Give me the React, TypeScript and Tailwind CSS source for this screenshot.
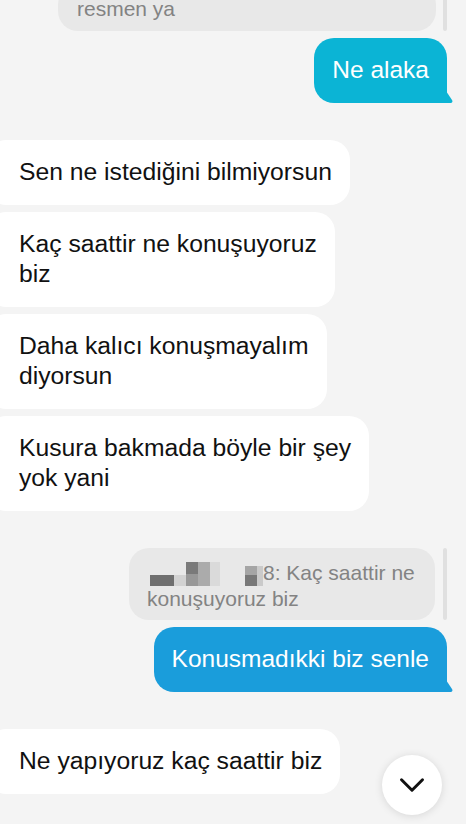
import { ChevronDown } from 'lucide-react'

const font = { fontFamily: '"Liberation Sans", Arial, sans-serif' }

function Tail({ color }: { color: string }) {
  return (
    <svg
      className="absolute bottom-0 right-[-7px]"
      width="8"
      height="12"
      viewBox="0 0 8 12"
    >
      <path d="M0 0 L6 9 Q7.3 11 5 12 L0 12 Z" fill={color} />
    </svg>
  )
}

function Incoming({ lines }: { lines: string[] }) {
  return (
    <div className="flex justify-start">
      <div className="ml-[-14px] w-fit rounded-[20px] bg-white pl-[33px] pr-[18px] pt-[17px] pb-[18px] text-[24.7px] leading-[30px] text-[#111]">
        {lines.map((l, i) => (
          <div key={i} className="whitespace-nowrap">
            {l}
          </div>
        ))}
      </div>
    </div>
  )
}

function Outgoing({ text, color }: { text: string; color: string }) {
  return (
    <div className="flex justify-end pr-[19px]">
      <div
        className="relative w-fit rounded-[20px] rounded-br-none px-[18px] pt-[17px] pb-[18px] text-[24.5px] leading-[30px] text-white whitespace-nowrap"
        style={{ backgroundColor: color }}
      >
        {text}
        <Tail color={color} />
      </div>
    </div>
  )
}

function Blur() {
  return (
    <span className="inline-flex items-end align-[-6px]">
      <span className="h-[11px] w-[24px] bg-[#6f6f6f]" />
      <span className="h-[11px] w-[12px] bg-[#d2d2d2]" />
      <span className="flex h-[24px] w-[12px] flex-col">
        <span className="h-[12px] bg-[#7a7a7a]" />
        <span className="h-[12px] bg-[#989898]" />
      </span>
      <span className="h-[24px] w-[12px] bg-[#ababab]" />
      <span className="h-[24px] w-[10px] bg-[#dadada]" />
      <span className="w-[25px]" />
      <span className="flex h-[20px] w-[12px] flex-col">
        <span className="h-[9px] bg-[#a5a5a5]" />
        <span className="h-[11px] bg-[#787878]" />
      </span>
      <span className="h-[20px] w-[6px] bg-[#cacaca]" />
    </span>
  )
}

export default function App() {
  return (
    <div
      className="relative flex h-[824px] w-[466px] flex-col overflow-hidden bg-[#f4f4f4]"
      style={font}
    >
      {/* quoted reply, cut at top */}
      <div className="mt-[-15px] flex justify-end gap-[7px] pr-[19px]">
        <div className="w-[378px] rounded-[20px] bg-[#e8e8e8] pl-[19px] pr-[18px] pt-[11px] pb-[10px] text-[21px] leading-[25px] text-[#838383]">
          resmen ya
        </div>
        <div className="w-[4px] rounded-full bg-[#e0e0e0]" />
      </div>

      <div className="mt-[7px]">
        <Outgoing text="Ne alaka" color="#0bb4d5" />
      </div>

      <div className="mt-[37px] flex flex-col gap-[7px]">
        <Incoming lines={['Sen ne istediğini bilmiyorsun']} />
        <Incoming lines={['Kaç saattir ne konuşuyoruz', 'biz']} />
        <Incoming lines={['Daha kalıcı konuşmayalım', 'diyorsun']} />
        <Incoming lines={['Kusura bakmada böyle bir şey', 'yok yani']} />
      </div>

      {/* quoted reply */}
      <div className="mt-[37px] flex justify-end gap-[8px] pr-[19px]">
        <div className="w-[306px] rounded-[20px] bg-[#e8e8e8] pl-[18px] pr-[14px] pt-[12px] pb-[9px] text-[21px] leading-[25px] text-[#838383]">
          <div className="whitespace-nowrap pl-[3px]">
            <Blur />
            8: Kaç saattir ne
          </div>
          <div className="whitespace-nowrap">konuşuyoruz biz</div>
        </div>
        <div className="w-[4px] rounded-full bg-[#e0e0e0]" />
      </div>

      <div className="mt-[7px]">
        <Outgoing text="Konusmadıkki biz senle" color="#1a9ddb" />
      </div>

      <div className="mt-[37px]">
        <Incoming lines={['Ne yapıyoruz kaç saattir biz']} />
      </div>

      {/* scroll to bottom */}
      <button className="absolute left-[382px] top-[755px] flex h-[60px] w-[60px] items-center justify-center rounded-full bg-white shadow-[0_1px_8px_rgba(0,0,0,0.12)]">
        <ChevronDown size={42} strokeWidth={1.7} color="#111" />
      </button>
    </div>
  )
}
